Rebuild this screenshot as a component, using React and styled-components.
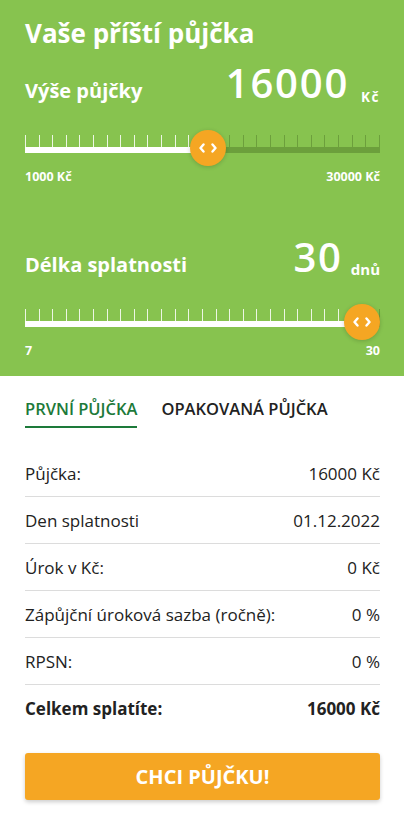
import React from 'react';
import styled, { createGlobalStyle } from 'styled-components';

const GlobalStyle = createGlobalStyle`
  body {
    margin: 0;
    background: #ffffff;
    font-family: "Open Sans", Lato, sans-serif;
  }
`

const Page = styled.div`
  width: 404px;
  color: #222222;
`

const Hero = styled.section`
  background-color: #87c34f;
  color: #ffffff;
  padding: 18px 24px 17px 25px;
`

const Title = styled.h1`
  margin: 0;
  font-size: 26px;
  line-height: 30px;
  font-weight: 700;
`

const HeadRow = styled.div`
  display: flex;
  justify-content: space-between;
  align-items: baseline;
  margin-top: ${(p) => p.gap}px;
`

const Label = styled.div`
  font-size: 20px;
  line-height: 24px;
  font-weight: 700;
`

const Value = styled.div`
  display: flex;
  align-items: baseline;
`

const Number = styled.span`
  font-size: 40px;
  line-height: 40px;
  font-weight: 600;
  letter-spacing: 1.8px;
`

const Unit = styled.span`
  font-size: ${(p) => p.size}px;
  line-height: 20px;
  font-weight: 700;
  letter-spacing: ${(p) => p.spacing || 0}px;
  margin-left: ${(p) => p.space}px;
  transform: translateY(${(p) => p.drop}px);
`

const Slider = styled.div`
  position: relative;
  height: 36px;
  margin-top: 27px;
  padding-top: 5px;
  box-sizing: border-box;
`

const Ticks = styled.div`
  display: flex;
  justify-content: space-between;
  height: 12px;
`

const Tick = styled.span`
  width: 1px;
  height: 100%;
  background: ${(p) => (p.active ? 'rgba(255,255,255,0.85)' : '#6c9f3c')};
`

const Bar = styled.div`
  position: relative;
  height: 6px;
  background: #6c9f3c;
`

const Fill = styled.div`
  height: 100%;
  background: #ffffff;
`

const Thumb = styled.div`
  position: absolute;
  top: 0;
  width: 36px;
  height: 36px;
  border-radius: 50%;
  background: #f5a623;
  box-shadow: 0 1px 4px rgba(0, 0, 0, 0.18);
  display: flex;
  align-items: center;
  justify-content: center;
`

const Scale = styled.div`
  display: flex;
  justify-content: space-between;
  margin-top: 3px;
  font-size: 12.5px;
  line-height: 16px;
  font-weight: 700;
`

const Body = styled.section`
  padding: 23px 24px 20px 25px;
`

const Tabs = styled.div`
  display: flex;
  gap: 24px;
`

const Tab = styled.div`
  font-size: 16.5px;
  line-height: 20px;
  font-weight: 600;
  padding-bottom: 7px;
  color: ${(p) => (p.active ? '#1d7a3a' : '#222222')};
  border-bottom: 2px solid ${(p) => (p.active ? '#1d7a3a' : 'transparent')};
`

const Rows = styled.div`
  margin-top: 22px;
`

const Row = styled.div`
  display: flex;
  justify-content: space-between;
  align-items: center;
  height: 46px;
  font-size: 17px;
  font-weight: ${(p) => (p.strong ? 700 : 400)};
  border-bottom: 1px solid #dcdcdc;

  &:last-child {
    border-bottom: none;
  }
`

const Button = styled.button`
  display: block;
  width: 100%;
  height: 47px;
  margin-top: 22px;
  border: none;
  border-radius: 3px;
  background: #f5a623;
  color: #ffffff;
  font-family: inherit;
  font-size: 20px;
  font-weight: 700;
  box-shadow: 0 2px 4px rgba(0, 0, 0, 0.2);
  cursor: pointer;
`

const Arrows = () => (
  <svg width="18" height="10" viewBox="0 0 18 10">
    <polyline points="4.5,1.5 1.5,5 4.5,8.5" fill="none" stroke="#fff" strokeWidth="2.4" strokeLinecap="round" strokeLinejoin="round" />
    <polyline points="13.5,1.5 16.5,5 13.5,8.5" fill="none" stroke="#fff" strokeWidth="2.4" strokeLinecap="round" strokeLinejoin="round" />
  </svg>
)

const WIDTH = 355
const THUMB = 36
const TICKS = 27

const Range = ({ value, min, max }) => {
  const pct = (value - min) / (max - min)
  const center = pct * (WIDTH - THUMB) + THUMB / 2
  return (
    <Slider>
      <Ticks>
        {Array.from({ length: TICKS }).map((_, i) => (
          <Tick key={i} active={(i * WIDTH) / (TICKS - 1) <= center && i < TICKS - 1} />
        ))}
      </Ticks>
      <Bar>
        <Fill style={{ width: center }} />
      </Bar>
      <Thumb style={{ left: center - THUMB / 2 }}>
        <Arrows />
      </Thumb>
    </Slider>
  )
}

const rows = [
  ['Půjčka:', '16000 Kč'],
  ['Den splatnosti', '01.12.2022'],
  ['Úrok v Kč:', '0 Kč'],
  ['Zápůjční úroková sazba (ročně):', '0 %'],
  ['RPSN:', '0 %'],
]

const App = () => {
  return (
    <Page>
      <GlobalStyle />
      <Hero>
        <Title>Vaše příští půjčka</Title>
        <HeadRow gap={15}>
          <Label>Výše půjčky</Label>
          <Value>
            <Number>16000</Number>
            <Unit size={13.5} spacing={1.5} space={12} drop={4}>Kč</Unit>
          </Value>
        </HeadRow>
        <Range value={16000} min={1000} max={30000} />
        <Scale>
          <span>1000 Kč</span>
          <span>30000 Kč</span>
        </Scale>
        <HeadRow gap={52}>
          <Label>Délka splatnosti</Label>
          <Value>
            <Number>30</Number>
            <Unit size={15} space={8} drop={3}>dnů</Unit>
          </Value>
        </HeadRow>
        <Range value={30} min={7} max={30} />
        <Scale>
          <span>7</span>
          <span>30</span>
        </Scale>
      </Hero>
      <Body>
        <Tabs>
          <Tab active>PRVNÍ PŮJČKA</Tab>
          <Tab>OPAKOVANÁ PŮJČKA</Tab>
        </Tabs>
        <Rows>
          {rows.map(([k, v]) => (
            <Row key={k}>
              <span>{k}</span>
              <span>{v}</span>
            </Row>
          ))}
          <Row strong>
            <span>Celkem splatíte:</span>
            <span>16000 Kč</span>
          </Row>
        </Rows>
        <Button>CHCI PŮJČKU!</Button>
      </Body>
    </Page>
  )
}

export default App;
